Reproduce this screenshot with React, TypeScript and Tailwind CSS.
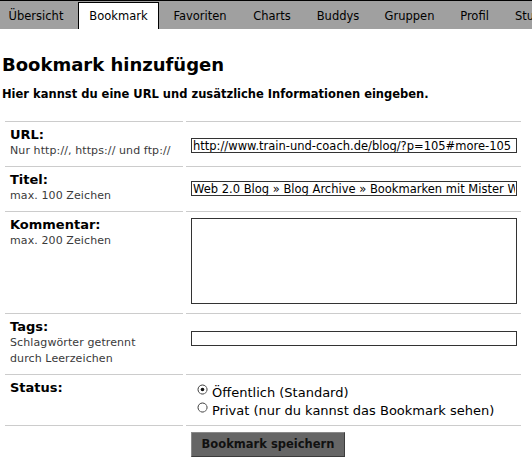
const TABS = [
  { label: "Übersicht", w: "w-[72px]", ml: "ml-0" },
  { label: "Bookmark", w: "w-[81px]", ml: "ml-[6px]", active: true },
  { label: "Favoriten", w: "w-[76px]", ml: "ml-[3px]" },
  { label: "Charts", w: "w-[62px]", ml: "ml-[3px]" },
  { label: "Buddys", w: "w-[64px]", ml: "ml-[3px]" },
  { label: "Gruppen", w: "w-[73px]", ml: "ml-[3px]" },
  { label: "Profil", w: "w-[51px]", ml: "ml-[3px]" },
];

function Radio({ checked }: { checked?: boolean }) {
  return (
    <svg width="11" height="11" viewBox="0 0 11 11" className="shrink-0">
      <circle cx="5.5" cy="5.5" r="4.5" fill="#fff" stroke="#3a3a3a" strokeWidth="1" />
      <path d="M2.3 8.7 A4.5 4.5 0 0 0 8.7 2.3" fill="none" stroke="#9a9a9a" strokeWidth="1" />
      {checked && <circle cx="5.5" cy="5.5" r="1.8" fill="#111" />}
    </svg>
  );
}

function Label({ title, hint }: { title: string; hint?: string[] }) {
  return (
    <div className="pl-[5px] pt-[5px]">
      <div className="text-[13px] font-bold leading-[16px] text-black">{title}</div>
      {hint?.map((h) => (
        <div key={h} className="text-[11px] leading-[16px] tracking-[0.1px] text-[#3a3a3a]">
          {h}
        </div>
      ))}
    </div>
  );
}

const field =
  "block h-[15px] w-[326px] border border-[#333] bg-white px-[1px] py-0 text-[11.5px] leading-[13px] text-black outline-none font-['DejaVu_Sans',sans-serif]";

export default function App() {
  return (
    <div className="h-[462px] w-[532px] overflow-hidden bg-white font-['DejaVu_Sans',sans-serif] text-black">
      {/* tab bar */}
      <div className="flex h-[29px] items-end overflow-hidden border-t border-black bg-[#a0a0a0]">
        {TABS.map((t) => (
          <div
            key={t.label}
            className={`${t.w} ${t.ml} flex h-[27px] shrink-0 items-center justify-center pt-[2px] text-[11.5px] text-black ${
              t.active ? "border border-b-0 border-black bg-white" : ""
            }`}
          >
            {t.label}
          </div>
        ))}
        <div className="ml-[3px] flex h-[27px] shrink-0 items-center pl-[12px] pt-[2px] text-[11.5px] whitespace-nowrap text-black">
          Studium
        </div>
      </div>

      <h1 className="ml-[2px] mt-[25px] text-[18px] font-bold leading-[21px]">Bookmark hinzufügen</h1>
      <p className="ml-[2px] mt-[13px] text-[11.5px] font-bold leading-[13px]">
        Hier kannst du eine URL und zusätzliche Informationen eingeben.
      </p>

      <div className="ml-[5px] mt-[20px] grid grid-cols-[178px_335px] gap-x-[3px]">
        <div className="h-[45px] border-t border-[#ccc]">
          <Label title="URL:" hint={["Nur http://, https:// und ftp://"]} />
        </div>
        <div className="border-t border-[#ccc] pl-[5px] pt-[16px]">
          <input className={field} defaultValue="http://www.train-und-coach.de/blog/?p=105#more-105" />
        </div>

        <div className="h-[45px] border-t border-[#ccc]">
          <Label title="Titel:" hint={["max. 100 Zeichen"]} />
        </div>
        <div className="border-t border-[#ccc] pl-[5px] pt-[14px]">
          <input
            className={field}
            defaultValue="Web 2.0 Blog » Blog Archive » Bookmarken mit Mister Wong"
          />
        </div>

        <div className="h-[102px] border-t border-[#ccc]">
          <Label title="Kommentar:" hint={["max. 200 Zeichen"]} />
        </div>
        <div className="border-t border-[#ccc] pl-[5px] pt-[6px]">
          <textarea className="block h-[86px] w-[326px] resize-none border border-[#333] bg-white outline-none" />
        </div>

        <div className="h-[61px] border-t border-[#ccc]">
          <Label title="Tags:" hint={["Schlagwörter getrennt", "durch Leerzeichen"]} />
        </div>
        <div className="border-t border-[#ccc] pl-[5px] pt-[17px]">
          <input className={field} defaultValue="" />
        </div>

        <div className="h-[51px] border-t border-[#ccc]">
          <Label title="Status:" />
        </div>
        <div className="border-t border-[#ccc] pl-[11px] pt-[9px] text-[13px] leading-[18px]">
          <div className="flex items-start gap-[4px]">
            <Radio checked />
            <span>Öffentlich (Standard)</span>
          </div>
          <div className="flex items-start gap-[4px]">
            <Radio />
            <span>Privat (nur du kannst das Bookmark sehen)</span>
          </div>
        </div>

        <div className="border-t border-[#ccc]" />
        <div className="border-t border-[#ccc] pl-[5px] pt-[5px]">
          <button className="h-[25px] w-[154px] border border-b-[#3c3c3c] border-l-[#8a8a8a] border-r-[#3c3c3c] border-t-[#8a8a8a] bg-[#666] text-[11.5px] font-bold text-[#111]">
            Bookmark speichern
          </button>
        </div>
      </div>
    </div>
  );
}
